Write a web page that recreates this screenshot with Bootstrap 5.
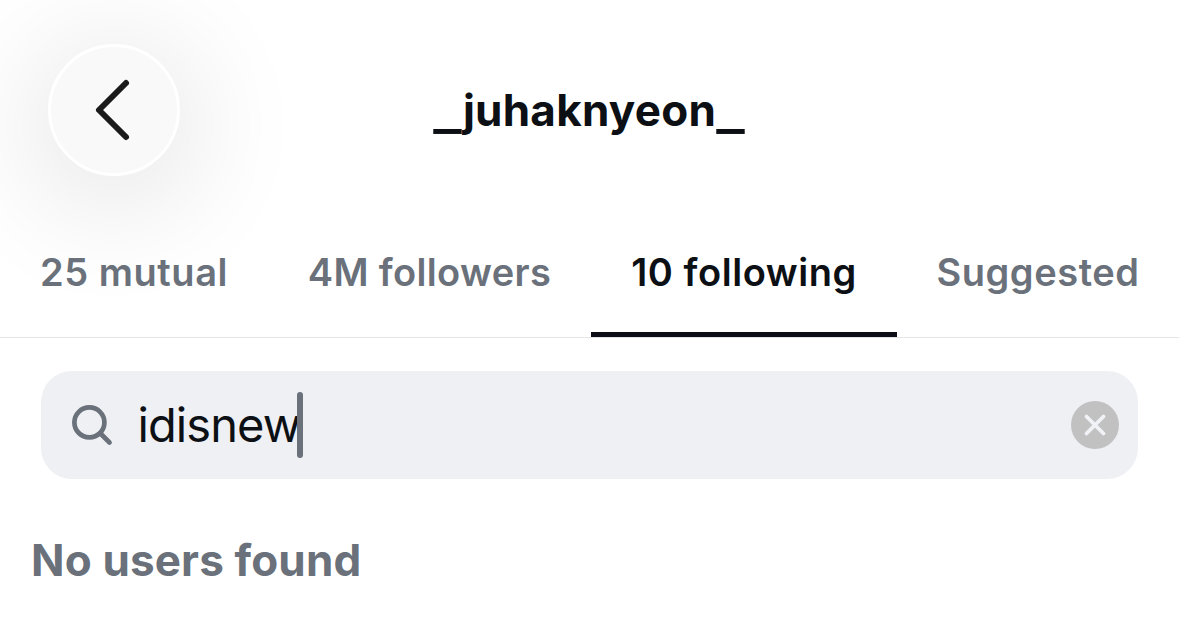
<!DOCTYPE html>
<html lang="en">
<head>
<meta charset="utf-8">
<meta name="viewport" content="width=device-width, initial-scale=1">
<title>_juhaknyeon_</title>
<link href="https://cdn.jsdelivr.net/npm/bootstrap@5.3.0/dist/css/bootstrap.min.css" rel="stylesheet">
<style>
body{font-family:Inter,"Liberation Sans",sans-serif;color:#0c1014;background:#fff;height:640px;overflow:hidden}
.top-row{height:220px;padding-left:48px}
.back-btn{width:132px;height:132px;background:#f9f9f9;border:3px solid #fff;box-shadow:0 16px 120px 14px rgba(0,0,0,.11);flex:none}
.account{font-size:44px;line-height:56px;font-weight:700;margin-right:181px;letter-spacing:.25px}
.bar-glyph{display:inline-block;transform:translateY(2.500px) scaleX(1.36);margin:0 3.500px}
.bar-glyph:first-child{margin-right:4.500px}
.tab-row{height:118px;border-bottom:1px solid #e4e5e7}
.tab-row .nav-link{height:117px;padding:30px 0 0;font-size:38px;line-height:44px;font-weight:600;letter-spacing:.55px;color:#6a717b;white-space:nowrap;text-align:center}
.tab-row .nav-link.active{color:#0c1014;border-bottom:5px solid #0b0c16}
.tab-mutual{width:268px}
.tab-row .tab-followers{width:323px;letter-spacing:.35px}
.tab-following{width:306px}
.tab-suggested{width:282px}
.search-box{height:108px;margin:33px 41px 0;border-radius:31px;background:#eff0f4;padding:0 19px 1px 30px}
.query{font-size:47px;line-height:64px;margin-left:24.500px;letter-spacing:-.9px}
.caret{width:6px;height:66px;border-radius:3px;background:#6a717b;margin-left:-3.500px}
.empty{font-size:44px;line-height:56px;font-weight:700;letter-spacing:.15px;color:#6a717b;margin:53px 0 0 31px}
</style>
</head>
<body>
<header class="top-row d-flex align-items-center">
  <button class="back-btn btn rounded-circle p-0 d-flex" aria-label="Back">
    <svg width="126" height="126" viewBox="51 47 126 126" fill="none" stroke="#1a1a1b" stroke-width="6" stroke-linecap="round" stroke-linejoin="round"><path d="M126 83 99 110l27 27"/></svg>
  </button>
  <h1 class="account flex-grow-1 text-center mb-0"><span class="bar-glyph">_</span>juhaknyeon<span class="bar-glyph">_</span></h1>
</header>
<nav class="tab-row nav flex-nowrap">
  <a class="nav-link tab-mutual">25 mutual</a>
  <a class="nav-link tab-followers">4M followers</a>
  <a class="nav-link tab-following active">10 following</a>
  <a class="nav-link tab-suggested">Suggested</a>
</nav>
<main>
  <div class="search-box d-flex align-items-center">
    <svg width="42" height="42" viewBox="71 404 42 42" fill="none" stroke="#6a717b" stroke-width="4.700" stroke-linecap="round"><circle cx="89.400" cy="422.400" r="15"/><path d="m100.500 433.500 9 9"/></svg>
    <span class="query">idisnew</span><i class="caret"></i>
    <svg class="ms-auto" width="48" height="48" viewBox="0 0 48 48"><circle cx="24" cy="24" r="24" fill="#c1c1c2"/><path d="m15.500 15.500 17 17m0-17-17 17" stroke="#f1f2f6" stroke-width="3.800" stroke-linecap="round"/></svg>
  </div>
  <p class="empty">No users found</p>
</main>
<script src="https://cdn.jsdelivr.net/npm/bootstrap@5.3.0/dist/js/bootstrap.bundle.min.js"></script>
</body>
</html>
